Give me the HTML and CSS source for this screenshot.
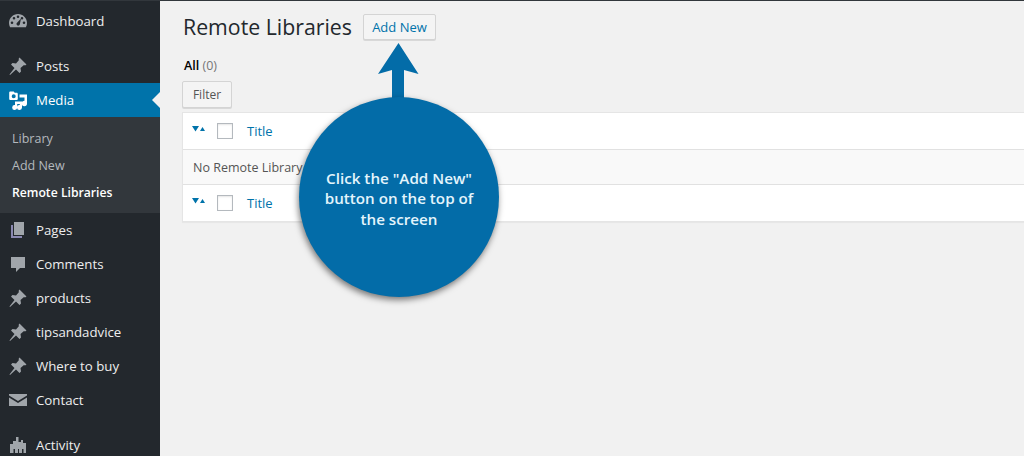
FILE: index.html
```html
<!DOCTYPE html>
<html lang="en">
<head>
<meta charset="utf-8">
<title>Remote Libraries</title>
<link rel="stylesheet" href="styles.css">
</head>
<body>
<div class="page">
  <nav class="sidebar">
    <a class="item"><svg class="ico" viewBox="0 0 20 20"><path d="M10 3C5 3 1 7 1 12c0 1.600.4 3 1.100 4.200h15.800C18.600 15 19 13.600 19 12c0-5-4-9-9-9zM4 13a1.300 1.300 0 1 1 0-2.600A1.300 1.300 0 0 1 4 13zm2-4.500a1.300 1.300 0 1 1 0-2.600 1.300 1.300 0 0 1 0 2.600zM10 7a1.300 1.300 0 1 1 0-2.600A1.300 1.300 0 0 1 10 7zm1.200 7.300a1.700 1.700 0 0 1-2.600-2L13 7.500l-1.200 6zM14 8.500a1.300 1.300 0 1 1 0-2.600 1.300 1.300 0 0 1 0 2.600zm2 4.500a1.300 1.300 0 1 1 0-2.600 1.300 1.300 0 0 1 0 2.600z"/></svg><span>Dashboard</span></a>
    <a class="item gap-top"><svg class="ico" viewBox="0 0 20 20"><use href="#pin"/></svg><span>Posts</span></a>
    <a class="item active"><svg class="ico" viewBox="0 0 20 20"><path fill-rule="evenodd" d="M2.500 1.500h3.200l1 1.300h1.800c.8 0 1.300.5 1.300 1.300v4.600c0 .8-.5 1.300-1.300 1.300H2.500c-.8 0-1.300-.5-1.300-1.300V2.800c0-.8.5-1.300 1.300-1.300zM5.700 8.200a2 2 0 1 0 0-4 2 2 0 0 0 0 4z"/><path d="M11.500 4.500h7.500v9a2.700 2.700 0 1 1-2.500-2.700V7.500h-5z"/><path d="M7 11.500h7v6a2.500 2.500 0 1 1-2.200-2.500v-1H9.200v3.500A2.500 2.500 0 1 1 7 15z"/></svg><span>Media</span></a>
    <div class="submenu">
      <a class="sub">Library</a>
      <a class="sub">Add New</a>
      <a class="sub current">Remote Libraries</a>
    </div>
    <a class="item"><svg class="ico" viewBox="0 0 20 20"><path d="M6 2h10v13H6z"/><path class="ico-dim" d="M3 5h2v11h9v2H3z"/></svg><span>Pages</span></a>
    <a class="item"><svg class="ico" viewBox="0 0 20 20"><path d="M3 3h14v11h-5l-4 4v-4H3z"/></svg><span>Comments</span></a>
    <a class="item"><svg class="ico" viewBox="0 0 20 20"><use href="#pin"/></svg><span>products</span></a>
    <a class="item"><svg class="ico" viewBox="0 0 20 20"><use href="#pin"/></svg><span>tipsandadvice</span></a>
    <a class="item"><svg class="ico" viewBox="0 0 20 20"><use href="#pin"/></svg><span>Where to buy</span></a>
    <a class="item"><svg class="ico" viewBox="0 0 20 20"><path d="M1 4h18v1.500L10 11 1 5.500zM1 7.500l9 5.500 9-5.500V16H1z"/></svg><span>Contact</span></a>
    <a class="item gap-top"><svg class="ico" viewBox="0 0 20 20"><path d="M8 2h2.500v5H13V5h2v3h3v10h-2.500v-4h-1.500v4h-3v-4h-1v4H7v-4H5.500v4H2V9h3V6h3z"/></svg><span>Activity</span></a>
    <svg class="defs" width="0" height="0"><defs><path id="pin" d="M11.500 1.500l7 7-1.500 1-1-.5-3.500 3 .5 3.500-1.500 1.500-3.500-3.500L2 19l-.5-.5 5-6.500-3.500-3.500L4.500 7l3.500.5 3-3.500-.5-1z"/></defs></svg>
  </nav>
  <main class="content">
    <header class="heading">
      <h1>Remote Libraries</h1>
      <a class="btn add">Add New</a>
    </header>
    <p class="views"><b>All</b> <span>(0)</span></p>
    <a class="btn filter">Filter</a>
    <div class="table">
      <div class="row head"><svg class="sort" viewBox="0 0 13 6"><path d="M0 0h7L3.500 5.500zM8 5l2.500-4L13 5z"/></svg><i class="check"></i><a class="col">Title</a></div>
      <div class="row msg">No Remote Library found</div>
      <div class="row head"><svg class="sort" viewBox="0 0 13 6"><path d="M0 0h7L3.500 5.500zM8 5l2.500-4L13 5z"/></svg><i class="check"></i><a class="col">Title</a></div>
    </div>
    <div class="callout">
      <svg class="arrow" viewBox="0 0 44 56"><path d="M21.500 0l20 31-14.500-4v29H15V27L1 31z"/></svg>
      <div class="bubble">Click the "Add New" button on the top of the screen</div>
    </div>
  </main>
</div>
</body>
</html>
```
FILE: styles.css
```css
* { box-sizing: border-box; }
html, body { margin: 0; height: 456px; overflow: hidden; }
body { font-family: "Open Sans", "Liberation Sans", sans-serif; font-size: 13px; color: #444; background: #f1f1f1; }
.page { display: flex; height: 456px; overflow: hidden; border-top: 1px solid #32373c; }
.sidebar { width: 160px; flex: none; background: #23282d; padding-top: 3px; position: relative; }
.item { display: flex; align-items: center; height: 34px; padding-left: 8px; color: #eee; font-size: 13.250px; }
.item span { margin-left: 8px; }
.gap-top { margin-top: 11px; }
.ico { width: 20px; height: 20px; fill: #a0a5aa; flex: none; }
.ico-dim { fill: #8a88b0; }
.defs { position: absolute; }
.active { background: #0073aa; color: #fff; position: relative; }
.active .ico { fill: #fff; }
.active::after { content: ""; position: absolute; right: 0; top: 9px; border: 8px solid transparent; border-right-color: #f1f1f1; border-left-width: 0; }
.submenu { background: #32373c; height: 96px; padding-top: 8px; display: flex; flex-direction: column; }
.sub { height: 27px; line-height: 27px; padding-left: 12px; font-size: 12.500px; color: #b4b9be; }
.current { color: #fff; font-weight: 600; font-size: 12.200px; }
.content { flex: 1; min-width: 0; position: relative; padding: 10px 0 0 22px; }
.heading { display: flex; align-items: center; gap: 11px; height: 33px; }
h1 { margin: -2px 0 0 1px; font-size: 21.300px; font-weight: 400; color: #23282d; }
.btn { display: inline-flex; align-items: center; justify-content: center; background: #f4f4f4; border: 1px solid #d4d4d4; border-radius: 2px; box-shadow: 0 1px 0 #d8d8d8; }
.add { width: 73px; height: 26px; color: #0073aa; font-size: 13px; margin-top: -1px; }
.views { margin: 13px 0 0 2px; height: 18px; line-height: 18px; font-size: 12.500px; color: #000; }
.views b { font-weight: 600; }
.views span { color: #777; }
.filter { width: 50px; height: 27px; margin-top: 6px; color: #555; font-size: 12px; }
.table { margin-top: 4px; background: #fff; border: 1px solid #e5e5e5; border-right: 0; box-shadow: 0 1px 1px rgba(0,0,0,.04); }
.row { display: flex; align-items: center; height: 36px; padding-left: 9px; }
.msg { border-top: 1px solid #e1e1e1; border-bottom: 1px solid #e1e1e1; background: #f9f9f9; padding-left: 10px; font-size: 12.500px; color: #555; }
.sort { width: 13px; height: 6px; fill: #0073aa; margin-top: -4px; }
.check { width: 16px; height: 16px; margin-left: 12px; background: #fff; border: 1px solid #b4b9be; box-shadow: inset 0 1px 2px rgba(0,0,0,.1); }
.col { margin-left: 14px; color: #0073aa; font-size: 13px; }
.callout { position: absolute; left: 139px; top: 42px; width: 200px; display: flex; flex-direction: column; align-items: center; }
.arrow { width: 44px; height: 56px; fill: #036ca8; margin-bottom: -1px; }
.bubble { width: 200px; height: 200px; border-radius: 50%; background: #036ca8; box-shadow: -1px 3px 6px rgba(0,0,0,.5); color: #e4f5fc; font-size: 15.200px; font-weight: 600; line-height: 20.500px; text-align: center; display: flex; align-items: center; padding: 3px 20px 0; margin-top: -1px; }
```
